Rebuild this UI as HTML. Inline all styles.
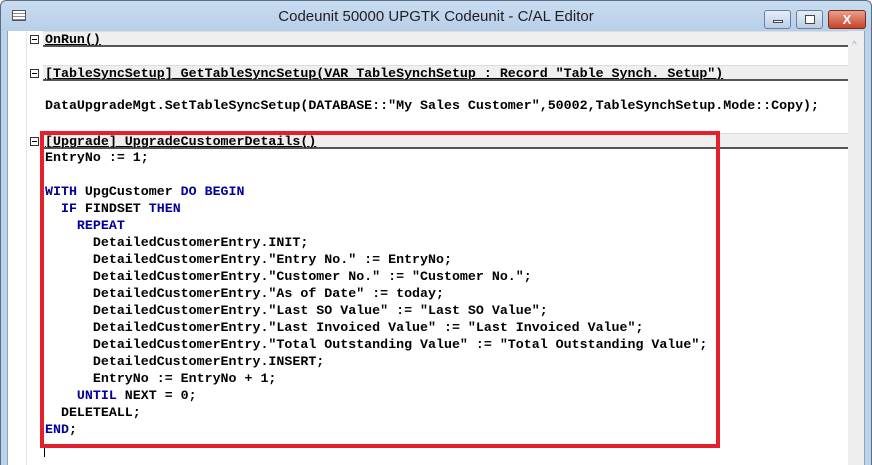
<!DOCTYPE html>
<html><head><meta charset="utf-8"><style>
*{margin:0;padding:0;box-sizing:border-box}
body{width:872px;height:465px;overflow:hidden;background:#fff;position:relative;font-family:"Liberation Sans",sans-serif}
.title{position:absolute;left:0;top:0;width:872px;height:31px;background:linear-gradient(#c9dcf0,#b7cfe9);border-top-left-radius:6px;border-top-right-radius:6px;border:1px solid #5b6d80;border-bottom:none}
.title .t{position:absolute;left:0;right:0;top:7px;text-align:center;font-size:15px;color:#1e1e1e}
.lf{position:absolute;left:0;top:31px;width:8px;height:434px;background:#bcd3ec;border-left:1px solid #5b6d80;border-right:1px solid #8ea4bd}
.rf{position:absolute;right:0;top:31px;width:8px;height:434px;background:#bcd3ec;border-right:1px solid #5b6d80;border-left:1px solid #8ea4bd}
.sb{position:absolute;left:848px;top:31px;width:16px;height:434px;background:#eeeeee}
.gut{position:absolute;left:26px;top:31px;width:1px;height:434px;background:#e6e6e6}
.btn{position:absolute;top:9px;height:19px;border:1px solid #6c7f96;border-radius:3px;background:linear-gradient(#e4eef9,#b9cde4)}
.code{position:absolute;left:45px;font:bold 13.3px/17px "Liberation Mono",monospace;color:#000;white-space:pre}
.k{color:#00009c}
.hd{position:absolute;left:43px;width:805px;height:16px;background:#efefef;border-bottom:2px solid #555;border-top:1px solid #ddd}
.hd span{position:absolute;left:2px;top:0px;font:bold 13.3px/15px "Liberation Mono",monospace;text-decoration:underline}
.mn{position:absolute;left:30px;width:9px;height:9px;border:1px solid #333;background:#fff}
.mn:after{content:"";position:absolute;left:1px;top:3px;width:5px;height:1px;background:#000}
.red{position:absolute;left:40px;top:131px;width:680px;height:317px;border:4px solid #e3202b}
</style></head><body>
<div class="title"><div style="position:absolute;left:11px;top:9px;width:14px;height:11px;border:1px solid #555;background:repeating-linear-gradient(#fff 0 2px,#889 2px 3px)"></div><div class="t">Codeunit 50000 UPGTK Codeunit - C/AL Editor</div>
<div class="btn" style="left:763px;width:27px"><div style="position:absolute;left:8px;top:9px;width:10px;height:3px;background:#fff;border:1px solid #444"></div></div>
<div class="btn" style="left:795px;width:27px"><div style="position:absolute;left:8px;top:4px;width:10px;height:9px;border:1px solid #444;background:#fff"></div></div>
<div class="btn" style="left:827px;width:38px;background:linear-gradient(#e8a08c,#c7432a);border-color:#7a2a1c;color:#fff;font:bold 13px/17px 'Liberation Sans';text-align:center">X</div>
</div>
<div class="lf"></div><div class="rf"></div><div class="sb"><div style="position:absolute;left:4px;top:9px;color:#aaa;font-size:10px">^</div></div>
<div class="gut"></div>
<div class="mn" style="top:35px"></div><div class="hd" style="top:31px"><span>OnRun()</span></div>
<div class="mn" style="top:69px"></div><div class="hd" style="top:65px"><span>[TableSyncSetup] GetTableSyncSetup(VAR TableSynchSetup : Record "Table Synch. Setup")</span></div>
<div class="code" style="top:97px">DataUpgradeMgt.SetTableSyncSetup(DATABASE::"My Sales Customer",50002,TableSynchSetup.Mode::Copy);</div>
<div class="mn" style="top:137px"></div><div class="hd" style="top:133px"><span>[Upgrade] UpgradeCustomerDetails()</span></div>
<div class="code" style="top:149px">EntryNo := 1;

<span class="k">WITH</span> UpgCustomer <span class="k">DO BEGIN</span>
  <span class="k">IF</span> FINDSET <span class="k">THEN</span>
    <span class="k">REPEAT</span>
      DetailedCustomerEntry.INIT;
      DetailedCustomerEntry."Entry No." := EntryNo;
      DetailedCustomerEntry."Customer No." := "Customer No.";
      DetailedCustomerEntry."As of Date" := today;
      DetailedCustomerEntry."Last SO Value" := "Last SO Value";
      DetailedCustomerEntry."Last Invoiced Value" := "Last Invoiced Value";
      DetailedCustomerEntry."Total Outstanding Value" := "Total Outstanding Value";
      DetailedCustomerEntry.INSERT;
      EntryNo := EntryNo + 1;
    <span class="k">UNTIL</span> NEXT = 0;
  DELETEALL;
<span class="k">END</span>;</div>
<div style="position:absolute;left:44px;top:447px;width:1px;height:10px;background:#000"></div>
<div class="red"></div>
</body></html>
